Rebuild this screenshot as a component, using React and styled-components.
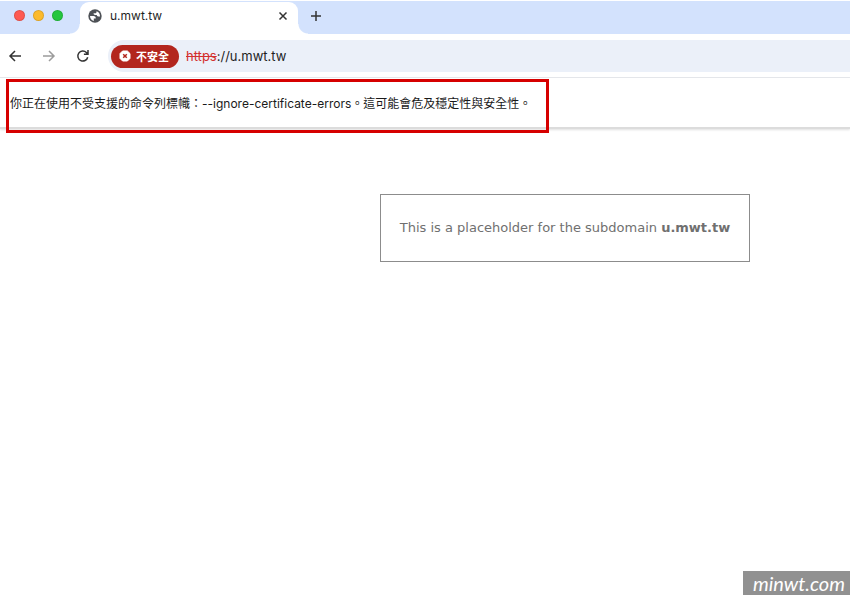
import React from "react";
import styled, { createGlobalStyle } from "styled-components";

const App = () => (
    <>
        <GlobalStyle />
        <Window>
            <TabStrip>
                <TrafficLights>
                    <Light color="#fe5a52" />
                    <Light color="#fcba2c" />
                    <Light color="#24c63e" />
                </TrafficLights>
                <Tab>
                    <GlobeIcon />
                    <TabTitle>u.mwt.tw</TabTitle>
                    <IconButton size={16} aria-label="Close tab">
                        <LineIcon size={10} viewBox="0 0 10 10">
                            <path d="M1.5 1.5l7 7M8.5 1.5l-7 7" />
                        </LineIcon>
                    </IconButton>
                </Tab>
                <IconButton size={24} aria-label="New tab">
                    <LineIcon size={12} viewBox="0 0 12 12">
                        <path d="M6 1v10M1 6h10" />
                    </LineIcon>
                </IconButton>
            </TabStrip>
            <Toolbar>
                <NavButtons>
                    <IconButton size={24} aria-label="Back">
                        <LineIcon size={14} viewBox="0 0 14 14">
                            <path d="M13 7H2M7 2L2 7l5 5" />
                        </LineIcon>
                    </IconButton>
                    <IconButton size={24} aria-label="Forward" disabled>
                        <LineIcon size={14} viewBox="0 0 14 14">
                            <path d="M1 7h11M7 2l5 5-5 5" />
                        </LineIcon>
                    </IconButton>
                    <IconButton size={24} aria-label="Reload">
                        <LineIcon size={14} viewBox="0 0 14 14">
                            <path d="M11.7 8.2A5 5 0 1 1 10.4 3.5L11.9 5M12 1v4.3H7.9" />
                        </LineIcon>
                    </IconButton>
                </NavButtons>
                <AddressBar>
                    <SecurityChip>
                        <DangerIcon />
                        不安全
                    </SecurityChip>
                    <Url href="https://u.mwt.tw">
                        <Scheme>https</Scheme>://u.mwt.tw
                    </Url>
                </AddressBar>
            </Toolbar>
            <InfoBar role="alert">
                <InfoText>你正在使用不受支援的命令列標幟：--ignore-certificate-errors。這可能會危及穩定性與安全性。</InfoText>
                <Highlight />
            </InfoBar>
            <Page>
                <Placeholder>
                    This is a placeholder for the subdomain <b>u.mwt.tw</b>
                </Placeholder>
            </Page>
            <Watermark>minwt.com</Watermark>
        </Window>
    </>
);

const GlobeIcon = () => (
    <svg width="16" height="16" viewBox="0 0 16 16" aria-hidden="true">
        <circle cx="8" cy="8" r="6.7" fill="#4d5156" />
        <path d="M3 8h3.5c1.3 0 2.2.8 2.2 1.8v.8H6.8V13C4.500 12.500 3 10.500 3 8z" fill="#fff" />
        <path d="M9.700 3.300C11.700 4 13 5.800 13 8v.4h-1.800c-.9 0-1.400-.6-1.400-1.400H8c-.8 0-1.400-.5-1.400-1.200V5.200h1.700c.8 0 1.100-.4 1.100-1 0-.4.1-.7.3-.9z" fill="#fff" />
    </svg>
);

const DangerIcon = () => (
    <svg width="12" height="12" viewBox="0 0 12 12" aria-hidden="true">
        <path d="M3.6 1h4.8L11 3.6v4.8L8.4 11H3.6L1 8.4V3.6z" fill="#fff" stroke="#fff" strokeLinejoin="round" />
        <path d="M4.2 4.2l3.6 3.6M7.8 4.2L4.2 7.8" stroke="#b3261e" strokeWidth="1.5" />
    </svg>
);

const GlobalStyle = createGlobalStyle`
    body {
        margin: 0;
        background: #fff;
        font-family: Inter, "Noto Sans CJK TC", sans-serif;
    }
`;

const Window = styled.div`
    position: relative;
    min-height: 100vh;
    overflow: hidden;
    display: flex;
    flex-direction: column;
`;

const TabStrip = styled.div`
    display: flex;
    align-items: center;
    height: 33px;
    margin-top: 1px;
    background: #d3e2fd;
`;

const TrafficLights = styled.div`
    display: flex;
    gap: 8px;
    padding: 0 17px 4px 14px;
`;

const Light = styled.span`
    box-sizing: border-box;
    width: 11px;
    height: 11px;
    border: 1px solid rgba(0, 0, 0, 0.12);
    border-radius: 50%;
    background: ${props => props.color};
`;

const Tab = styled.div`
    position: relative;
    box-sizing: border-box;
    display: flex;
    align-items: center;
    gap: 7px;
    width: 218px;
    height: 32px;
    margin-top: 1px;
    margin-right: 6px;
    padding: 0 7px 5px 7px;
    border-radius: 9px 9px 0 0;
    background: #fff;

    /* flared feet that join the tab to the toolbar */
    &::before,
    &::after {
        content: "";
        position: absolute;
        bottom: 0;
        width: 10px;
        height: 10px;
    }
    &::before {
        right: 100%;
        background: radial-gradient(circle at 0 0, transparent 9px, #fff 10px);
    }
    &::after {
        left: 100%;
        background: radial-gradient(circle at 100% 0, transparent 9px, #fff 10px);
    }
`;

const TabTitle = styled.span`
    flex: 1;
    font-size: 12px;
    line-height: 16px;
    color: #1f1f1f;
`;

const IconButton = styled.button`
    display: flex;
    justify-content: center;
    align-items: center;
    flex: none;
    width: ${props => props.size}px;
    height: ${props => props.size}px;
    padding: 0;
    border: 0;
    background: none;
    color: #333;

    &:disabled {
        color: #9c9c9c;
    }

    ${TabStrip} > & {
        margin-bottom: 4px;
    }
`;

const LineIcon = styled.svg`
    width: ${props => props.size}px;
    height: ${props => props.size}px;
    fill: none;
    stroke: currentColor;
    stroke-width: 1.5;
`;

const Toolbar = styled.div`
    display: flex;
    align-items: center;
    padding: 6px 0 5px 3px;
    border-bottom: 1px solid #e6e8ec;
`;

const NavButtons = styled.div`
    display: flex;
    gap: 10px;
    padding-right: 13px;
`;

const AddressBar = styled.div`
    flex: 1;
    display: flex;
    align-items: center;
    gap: 7px;
    height: 32px;
    padding-left: 3px;
    border-radius: 16px 0 0 16px;
    background: #ebf0f9;
`;

const SecurityChip = styled.button`
    display: flex;
    align-items: center;
    gap: 5px;
    height: 23px;
    padding: 0 10px 0 8px;
    border: 0;
    border-radius: 12px;
    background: #b3261e;
    color: #fff;
    font-family: inherit;
    font-size: 11px;
    font-weight: 700;
`;

const Url = styled.a`
    font-size: 13px;
    line-height: 20px;
    color: #1f1f1f;
    text-decoration: none;
`;

const Scheme = styled.span`
    color: #d3302f;
    text-decoration: line-through;
`;

const InfoBar = styled.div`
    position: relative;
    padding: 17px 10px 14px;
    border-bottom: 2px solid #dcdcdc;
    box-shadow: 0 1px 2px rgba(0, 0, 0, 0.12);
`;

const InfoText = styled.p`
    margin: 0;
    font-size: 12px;
    line-height: 18px;
    color: #1a1a1a;
`;

/* hand-marked frame drawn over the warning */
const Highlight = styled.div`
    position: absolute;
    top: 1px;
    bottom: -6px;
    left: 6px;
    width: 537px;
    border: 3px solid #d60000;
`;

const Page = styled.main`
    display: flex;
    justify-content: center;
    padding: 65px 0 0 280px;
`;

const Placeholder = styled.p`
    margin: 0;
    padding: 23px 19px;
    border: 1px solid #8c8c8c;
    font-family: "DejaVu Sans", Verdana, sans-serif;
    font-size: 13px;
    line-height: 20px;
    color: #707070;
`;

const Watermark = styled.div`
    position: absolute;
    right: 0;
    bottom: 0;
    padding: 0 5px 0 10px;
    background: #919191;
    color: #fff;
    font-family: Lato, sans-serif;
    font-size: 20px;
    font-style: italic;
    line-height: 24px;
`;

export default App;
